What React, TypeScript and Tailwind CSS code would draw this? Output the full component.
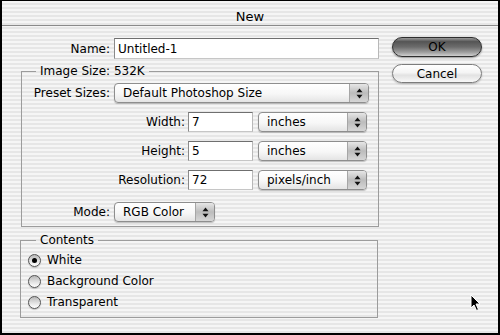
import React from "react";

const stripes =
  "bg-[repeating-linear-gradient(to_bottom,#f5f5f5_0px,#f5f5f5_2px,#e6e6e6_2px,#e6e6e6_4px)]";

function UpDown() {
  return (
    <svg width="7" height="11" viewBox="0 0 7 11" fill="#111">
      <path d="M0.5 4.2 L3.5 0.5 L6.5 4.2 Z" />
      <path d="M0.5 6.8 L3.5 10.5 L6.5 6.8 Z" />
    </svg>
  );
}

function Popup({ label, className }: { label: string; className: string }) {
  return (
    <div
      className={`flex h-[20px] items-stretch rounded-[4px] border border-[#8e8e8e] bg-[linear-gradient(to_bottom,#ffffff,#f7f7f7_55%,#e4e4e4)] shadow-[0_1px_1px_rgba(0,0,0,0.22)] ${className}`}
    >
      <span className="flex flex-1 items-center pl-[8px] text-[12px] leading-none text-black">
        {label}
      </span>
      <span className="flex w-[19px] items-center justify-center rounded-r-[3px] border-l border-[#a6a6a6] bg-[linear-gradient(to_bottom,#e6e6e6,#bcbcbc_50%,#d6d6d6)]">
        <UpDown />
      </span>
    </div>
  );
}

function Field({ value, className }: { value: string; className: string }) {
  return (
    <input
      readOnly
      defaultValue={value}
      className={`border border-t-[#6f6f6f] border-l-[#8a8a8a] border-r-[#b8b8b8] border-b-[#c6c6c6] bg-white pl-[3px] text-[12px] text-black outline-none ${className}`}
    />
  );
}

function Radio({ label, checked }: { label: string; checked?: boolean }) {
  return (
    <div className="flex h-[16px] items-center">
      <span className="ml-[7px] flex h-[13px] w-[13px] items-center justify-center rounded-full border border-[#555] bg-[linear-gradient(to_bottom,#b8b8b8,#e6e6e6_60%,#ffffff)] shadow-[0_1px_1px_rgba(0,0,0,0.2)]">
        {checked && <span className="h-[5px] w-[5px] rounded-full bg-black" />}
      </span>
      <span className="ml-[6px] text-[12px] leading-none text-black">{label}</span>
    </div>
  );
}

export default function App() {
  return (
    <div className="relative h-[335px] w-[500px] bg-black px-[2px] pt-[1px] pb-[2px] font-['DejaVu_Sans',sans-serif] text-black">
      <div className={`flex h-full w-full flex-col ${stripes}`}>
        {/* title bar */}
        <div className="flex h-[25px] items-center justify-center border-b border-[#8a8a8a] pt-[6px] text-[13px] leading-none">
          New
        </div>

        <div className="flex pl-[18px]">
          {/* left column */}
          <div className="flex w-[359px] flex-col pt-[12px]">
            <div className="flex h-[21px] items-center">
              <span className="w-[90px] text-right text-[12px] leading-none">Name:</span>
              <Field value="Untitled-1" className="ml-[4px] h-[21px] w-[265px]" />
            </div>

            <fieldset className="mt-[4px] ml-[1px] w-[358px] border border-[#9c9c9c] pb-[4px]">
              <legend className="ml-[14px] px-[4px] text-[12px] leading-[16px]">
                Image Size: 532K
              </legend>
              <div className="mt-[4px] flex items-center">
                <span className="w-[88px] text-right text-[12px] leading-none">Preset Sizes:</span>
                <Popup label="Default Photoshop Size" className="ml-[4px] w-[255px]" />
              </div>
              {[
                ["Width:", "7", "inches"],
                ["Height:", "5", "inches"],
                ["Resolution:", "72", "pixels/inch"],
              ].map(([name, val, unit]) => (
                <div key={name} className="mt-[9px] flex items-center">
                  <span className="w-[163px] text-right text-[12px] leading-none">{name}</span>
                  <Field value={val} className="ml-[3px] h-[20px] w-[65px]" />
                  <Popup label={unit} className="ml-[5px] w-[109px]" />
                </div>
              ))}
              <div className="mt-[12px] flex items-center">
                <span className="w-[88px] text-right text-[12px] leading-none">Mode:</span>
                <Popup label="RGB Color" className="ml-[4px] w-[101px]" />
              </div>
            </fieldset>

            <fieldset className="mt-[5px] w-[358px] border border-[#9c9c9c] pb-[7px]">
              <legend className="ml-[15px] px-[4px] text-[12px] leading-[16px]">Contents</legend>
              <div className="mt-[4px] flex flex-col gap-[5px]">
                <Radio label="White" checked />
                <Radio label="Background Color" />
                <Radio label="Transparent" />
              </div>
            </fieldset>
          </div>

          {/* buttons */}
          <div className="ml-[13px] flex flex-col gap-[7px] pt-[11px]">
            <button className="h-[20px] w-[90px] rounded-full border border-[#2e2e2e] bg-[linear-gradient(to_bottom,#9a9a9a,#555555_20%,#6c6c6c_50%,#a0a0a0_80%,#cfcfcf)] text-[12px] leading-none text-black shadow-[0_1px_2px_rgba(0,0,0,0.4)]">
              OK
            </button>
            <button className="h-[19px] w-[90px] rounded-full border border-[#7c7c7c] bg-[linear-gradient(to_bottom,#ffffff,#f4f4f4_45%,#e2e2e2_60%,#f8f8f8)] text-[12px] leading-none text-black shadow-[0_1px_2px_rgba(0,0,0,0.25)]">
              Cancel
            </button>
          </div>
        </div>
      </div>

      {/* mouse pointer */}
      <svg
        className="absolute left-[470px] top-[294px]"
        width="12"
        height="18"
        viewBox="0 0 12 18"
      >
        <path
          d="M1 1 L1 14 L4 11 L6.5 16.5 L8.5 15.5 L6 10 L10 10 Z"
          fill="#000"
          stroke="#fff"
          strokeWidth="1"
          strokeLinejoin="round"
        />
      </svg>
    </div>
  );
}
